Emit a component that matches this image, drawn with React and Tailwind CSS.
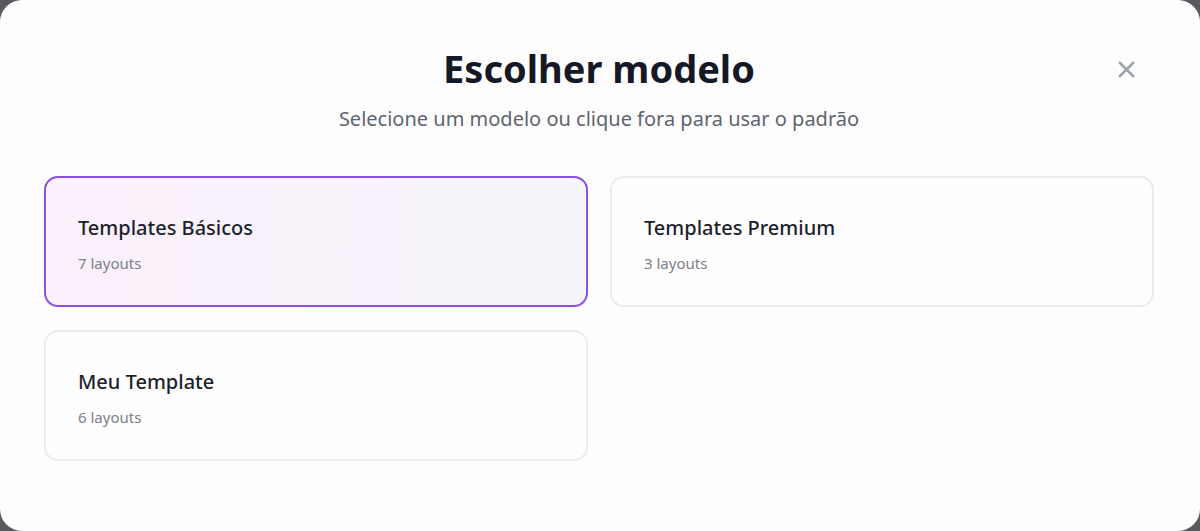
import React, { useState } from 'react';
import { X } from 'lucide-react';

const templates = [
  { id: 'basic', name: 'Templates Básicos', count: 7 },
  { id: 'premium', name: 'Templates Premium', count: 3 },
  { id: 'mine', name: 'Meu Template', count: 6 },
];

export default function App() {
  const [selected, setSelected] = useState('basic');

  return (
    <div className="h-[531px] w-[1200px] bg-[#5a5a5e] font-['Noto_Sans',sans-serif]">
      <div className="relative h-full w-full rounded-[22px] bg-[#fdfdfd] pl-[44px] pr-[46px] pt-[41px]">
        <button className="absolute right-[60px] top-[56px] text-[#9ca3af]">
          <X className="h-[27px] w-[27px]" strokeWidth={2.2} />
        </button>

        <div className="text-center">
          <h2 className="text-[38px] font-bold leading-[54px] text-[#161826]">Escolher modelo</h2>
          <p className="mt-[10px] text-[20px] leading-[28px] text-[#5f6470]">
            Selecione um modelo ou clique fora para usar o padrão
          </p>
        </div>

        <div className="mt-[43px] grid grid-cols-2 gap-x-[22px] gap-y-[23px]">
          {templates.map((t) => {
            const active = selected === t.id;
            return (
              <button
                key={t.id}
                onClick={() => setSelected(t.id)}
                className={
                  active
                    ? 'h-[131px] rounded-[14px] border-2 border-[#8b52e0] bg-gradient-to-r from-[#fbf0fb] to-[#f5f4fb] px-[32px] pt-[4px] text-left'
                    : 'h-[131px] rounded-[14px] border-2 border-[#ececee] bg-[#fefefe] px-[32px] pt-[4px] text-left'
                }
              >
                <div className="text-[20px] font-medium leading-[28px] text-[#1d1f2b]">{t.name}</div>
                <div className="mt-[11px] text-[15px] leading-[20px] text-[#7b7f88]">{t.count} layouts</div>
              </button>
            );
          })}
        </div>
      </div>
    </div>
  );
}
